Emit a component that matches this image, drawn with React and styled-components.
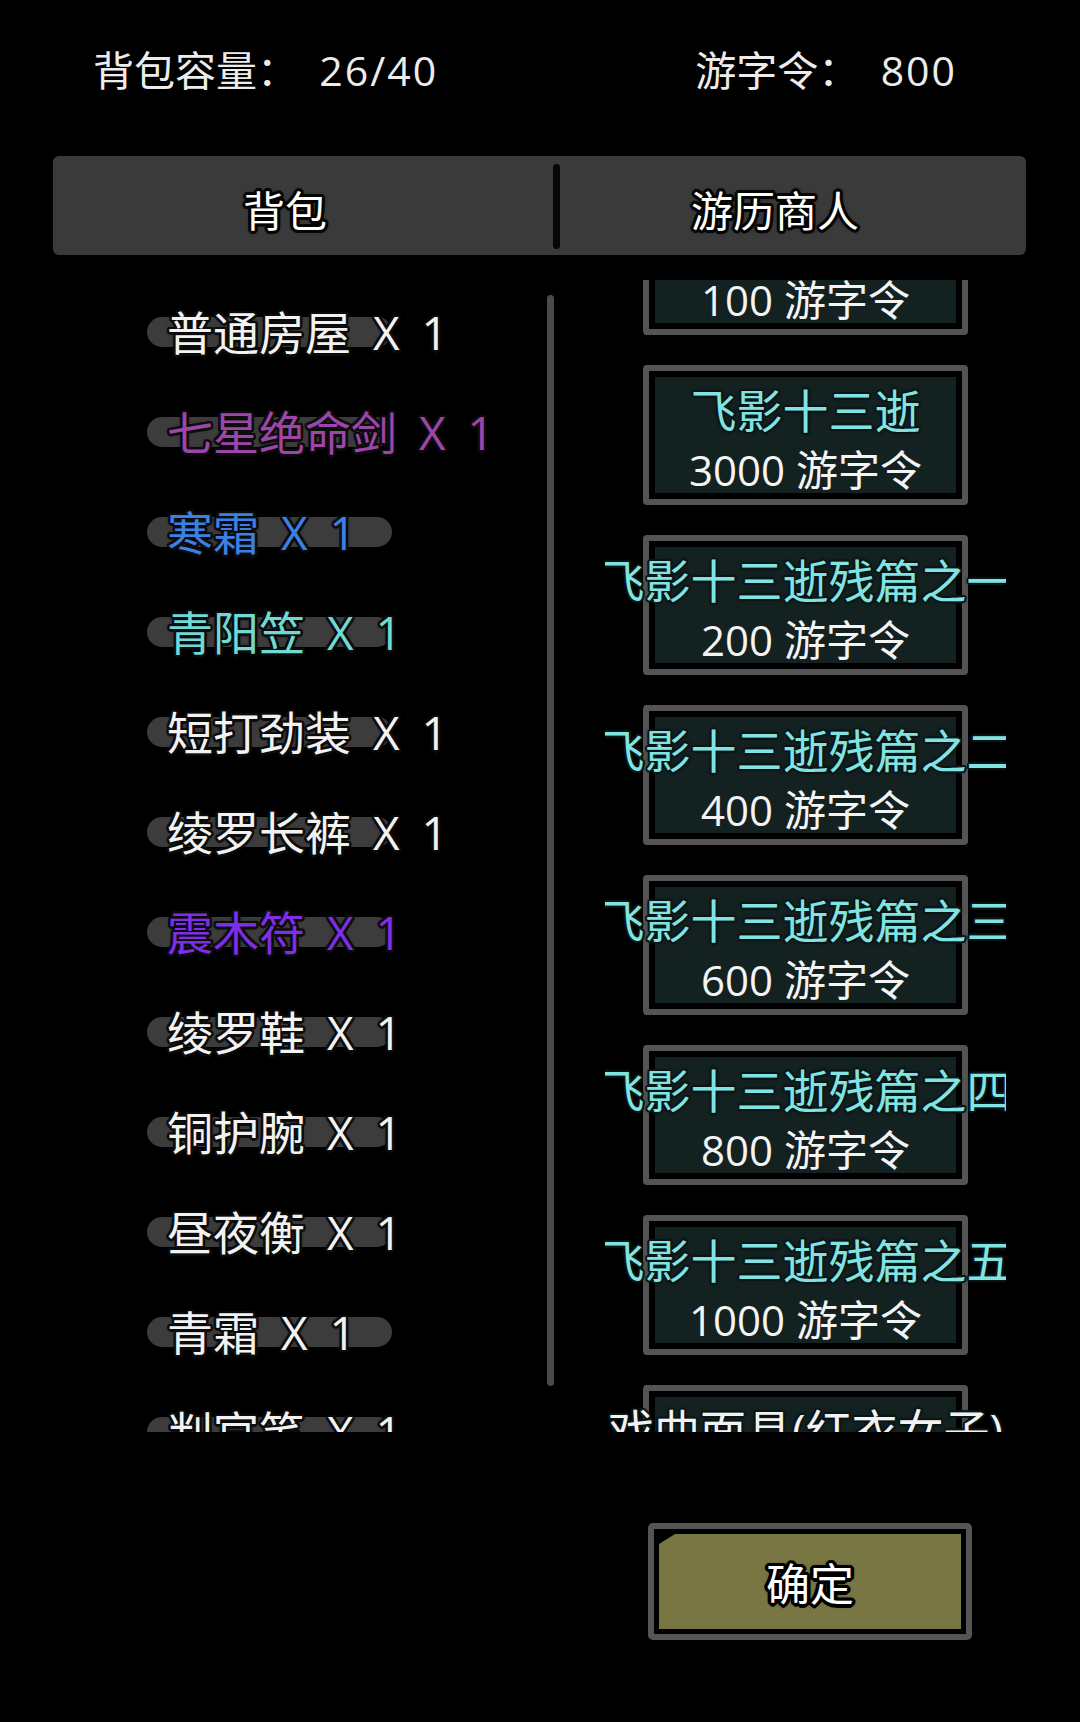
import React from "react";
import styled, { createGlobalStyle, css } from "styled-components";

const GlobalStyle = createGlobalStyle`
  html, body {
    margin: 0;
    padding: 0;
    background: #000;
  }
  body {
    font-family: "Open Sans", "Noto Sans CJK SC", sans-serif;
    color: #f2f2f2;
  }
`;

// builds a solid outline round the glyphs out of text-shadows
const outline = (w, color) => {
  const shadows = [];
  for (let i = 0; i < 16; i++) {
    const a = (i / 16) * Math.PI * 2;
    shadows.push(
      `${(Math.cos(a) * w).toFixed(2)}px ${(Math.sin(a) * w).toFixed(2)}px 0 ${color}`
    );
  }
  shadows.push(`0 0 ${w + 2}px ${color}`);
  return css`
    text-shadow: ${shadows.join(", ")};
  `;
};

const StyledPage = styled.div`
  width: 1080px;
  height: 1722px;
  background: #000;
  display: flex;
  flex-direction: column;
  overflow: hidden;
`;

const StyledHeader = styled.div`
  height: 140px;
  box-sizing: border-box;
  padding: 0 123px 4px 93px;
  display: flex;
  align-items: center;
  justify-content: space-between;
  font-size: 41px;
  color: #ececec;
  white-space: pre;
`;

const StyledStat = styled.span`
  b {
    font-weight: 400;
    letter-spacing: 2px;
  }
`;

const StyledTabBar = styled.div`
  margin: 16px 54px 0 53px;
  height: 99px;
  background: #3a3a3a;
  border-radius: 6px;
  display: flex;
  align-items: center;
`;

const StyledTab = styled.div`
  flex: ${(p) => p.grow};
  height: 100%;
  display: flex;
  align-items: center;
  justify-content: center;
  padding-right: 36px;
  padding-top: 6px;
  box-sizing: border-box;
  font-size: 42px;
  color: #fff;
  ${outline(3, "#050505")}
`;

const StyledDivider = styled.div`
  width: 7px;
  height: 85px;
  border-radius: 4px;
  background: #070707;
  margin-top: 1px;
`;

const StyledMain = styled.div`
  margin-top: 25px;
  height: 1152px;
  display: flex;
  padding-left: 53px;
`;

const StyledBagList = styled.div`
  width: 494px;
  height: 100%;
  overflow: hidden;
  display: flex;
  flex-direction: column;
`;

const StyledRow = styled.div`
  height: 100px;
  flex-shrink: 0;
  display: grid;
  align-items: center;
  padding-left: 94px;
  font-size: 46px;
`;

const StyledPill = styled.div`
  grid-area: 1 / 1;
  width: 245px;
  height: 30px;
  border-radius: 15px;
  background: #3c3c3c;
  margin-top: 3px;
`;

const StyledItemName = styled.span`
  grid-area: 1 / 1;
  z-index: 1;
  padding-left: 20px;
  white-space: pre;
  word-spacing: 10px;
  color: ${(p) => p.color};
  ${outline(2.5, "rgba(12,12,12,0.95)")}
`;

const StyledScrollbar = styled.div`
  width: 7px;
  height: 1091px;
  margin-top: 15px;
  border-radius: 4px;
  background: #4a4a4a;
`;

const StyledShop = styled.div`
  width: 401px;
  height: 100%;
  margin-left: 51px;
  overflow: hidden;
`;

const StyledCardList = styled.div`
  margin-top: -85px;
  display: flex;
  flex-direction: column;
  align-items: center;
  gap: 30px;
`;

const StyledCard = styled.div`
  width: 325px;
  height: 140px;
  flex-shrink: 0;
  box-sizing: border-box;
  border: 6px solid #545454;
  border-radius: 4px;
  padding: 6px;
  background: #000;
  display: flex;
`;

const StyledCardInner = styled.div`
  flex: 1;
  min-width: 0;
  background: #142121;
  display: flex;
  flex-direction: column;
  align-items: center;
  padding-top: 8px;
  gap: 12px;
`;

const StyledCardTitle = styled.div`
  flex-shrink: 0;
  line-height: 50px;
  font-size: 46px;
  white-space: nowrap;
  color: ${(p) => p.color};
  ${outline(2, "rgba(10,22,22,0.95)")}
`;

const StyledPrice = styled.div`
  line-height: 46px;
  font-size: 42px;
  white-space: pre;
  color: #f4f4f4;
`;

const StyledFooter = styled.div`
  margin-top: 91px;
  display: flex;
  justify-content: flex-end;
  padding-right: 108px;
`;

const StyledConfirm = styled.button`
  width: 324px;
  height: 117px;
  box-sizing: border-box;
  border: 6px solid #555;
  border-radius: 5px;
  padding: 5px;
  background: #000;
  display: flex;
  cursor: pointer;
  font-family: inherit;
`;

const StyledConfirmFace = styled.div`
  flex: 1;
  background: #787642;
  clip-path: polygon(16px 0, 100% 0, 100% 100%, 0 100%, 0 10px);
  display: flex;
  align-items: center;
  justify-content: center;
  font-size: 44px;
  color: #fff;
  ${outline(3.5, "#000")}
`;

const bagItems = [
  { name: "普通房屋 X 1", color: "#f2f2f2" },
  { name: "七星绝命剑 X 1", color: "#9d45a9" },
  { name: "寒霜 X 1", color: "#3d80e4" },
  { name: "青阳笠 X 1", color: "#70d9d6" },
  { name: "短打劲装 X 1", color: "#f2f2f2" },
  { name: "绫罗长裤 X 1", color: "#f2f2f2" },
  { name: "震木符 X 1", color: "#7d2ee6" },
  { name: "绫罗鞋 X 1", color: "#f2f2f2" },
  { name: "铜护腕 X 1", color: "#f2f2f2" },
  { name: "昼夜衡 X 1", color: "#f2f2f2" },
  { name: "青霜 X 1", color: "#f2f2f2" },
  { name: "判官笔 X 1", color: "#f2f2f2" },
  { name: "麻布腰带 X 1", color: "#f2f2f2" },
];

const cyan = "#82e4e2";

const shopItems = [
  { title: "飞影十三逝残篇", price: 100, color: cyan },
  { title: "飞影十三逝", price: 3000, color: cyan },
  { title: "飞影十三逝残篇之一", price: 200, color: cyan },
  { title: "飞影十三逝残篇之二", price: 400, color: cyan },
  { title: "飞影十三逝残篇之三", price: 600, color: cyan },
  { title: "飞影十三逝残篇之四", price: 800, color: cyan },
  { title: "飞影十三逝残篇之五", price: 1000, color: cyan },
  { title: "戏曲面具(红衣女子)", price: 500, color: "#f2f2f2" },
];

const App = () => {
  return (
    <StyledPage>
      <GlobalStyle />
      <StyledHeader>
        <StyledStat>
          背包容量：  <b>26/40</b>
        </StyledStat>
        <StyledStat>
          游字令：  <b>800</b>
        </StyledStat>
      </StyledHeader>

      <StyledTabBar>
        <StyledTab grow={502}>背包</StyledTab>
        <StyledDivider />
        <StyledTab grow={465}>游历商人</StyledTab>
      </StyledTabBar>

      <StyledMain>
        <StyledBagList>
          {bagItems.map((item, idx) => (
            <StyledRow key={idx}>
              <StyledPill />
              <StyledItemName color={item.color}>{item.name}</StyledItemName>
            </StyledRow>
          ))}
        </StyledBagList>
        <StyledScrollbar />
        <StyledShop>
          <StyledCardList>
            {shopItems.map((item, idx) => (
              <StyledCard key={idx}>
                <StyledCardInner>
                  <StyledCardTitle color={item.color}>{item.title}</StyledCardTitle>
                  <StyledPrice>{`${item.price} 游字令`}</StyledPrice>
                </StyledCardInner>
              </StyledCard>
            ))}
          </StyledCardList>
        </StyledShop>
      </StyledMain>

      <StyledFooter>
        <StyledConfirm>
          <StyledConfirmFace>确定</StyledConfirmFace>
        </StyledConfirm>
      </StyledFooter>
    </StyledPage>
  );
};

export default App;
